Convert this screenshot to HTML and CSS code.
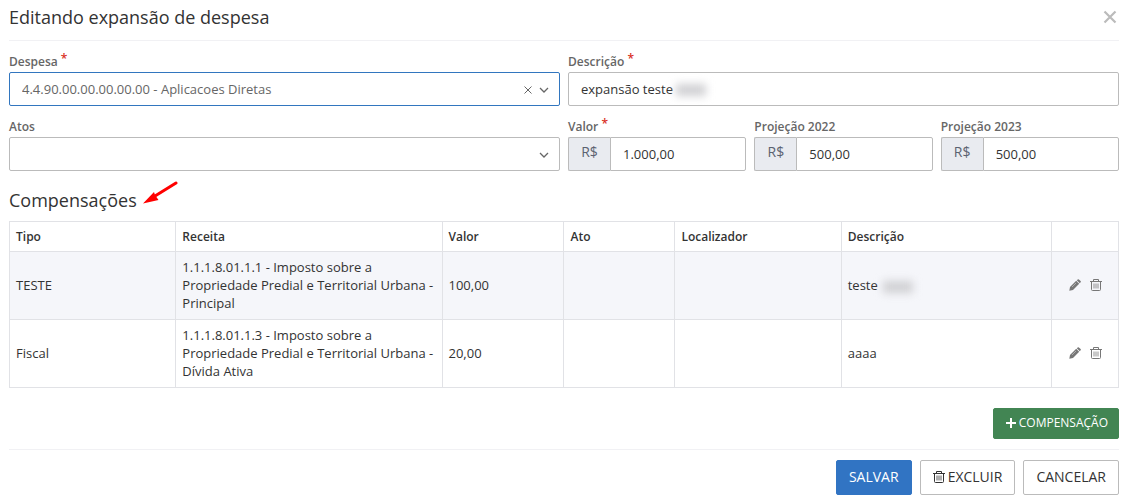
FILE: index.html
```html
<!DOCTYPE html>
<html lang="pt-BR">
<head>
<meta charset="utf-8">
<title>Editando expansão de despesa</title>
<link rel="stylesheet" href="styles.css">
</head>
<body>
<svg class="sprite" aria-hidden="true">
  <symbol id="trash" viewBox="0 0 12 12"><path d="M0 2.500h12M3.500 2.500V.5h5v2M1.500 2.500V10.500q0 1 1 1h7q1 0 1-1V2.500" fill="none" stroke="currentColor"/><path d="M4 4.500v5M6 4.500v5M8 4.500v5" stroke="currentColor" stroke-width=".8"/></symbol>
  <symbol id="pencil" viewBox="0 0 12 12"><path d="M.3 11.700l.7-3.700L7.200 1.800l3 3L4 11zM7.800 1.200l.9-.8q.6-.5 1.200 0l1.700 1.700q.5.600 0 1.200l-.8.900z" fill="currentColor"/><path d="M3 8l4-4" stroke="#fff" stroke-width=".4"/></symbol>
  <symbol id="chevron" viewBox="0 0 10 6"><path d="M1 1l4 4 4-4" fill="none" stroke="currentColor" stroke-width="1.300"/></symbol>
</svg>
<form class="dialog">
  <header class="dialog-header">
    <h1 class="title">Editando expansão de despesa</h1>
    <button class="close" type="button" aria-label="Fechar"><svg viewBox="0 0 14 14" width="14" height="14"><path d="M1.500 1.500l11 11M12.500 1.500l-11 11" stroke="currentColor" stroke-width="2.200"/></svg></button>
  </header>

  <div class="fields">
    <div class="field">
      <label class="label" for="despesa">Despesa <span class="required">*</span></label>
      <div class="select-box">
        <select class="control select focused" id="despesa"><option>4.4.90.00.00.00.00.00 - Aplicacoes Diretas</option></select>
        <button class="clear" type="button" aria-label="Limpar"><svg viewBox="0 0 8 8" width="8" height="8"><path d="M.5.500l7 7M7.500.500l-7 7" stroke="currentColor"/></svg></button>
        <svg class="chevron" width="10" height="6"><use href="#chevron"/></svg>
      </div>
    </div>
    <div class="field">
      <label class="label" for="descricao">Descrição <span class="required">*</span></label>
      <div class="select-box">
        <input class="control" id="descricao" type="text" value="expansão teste">
        <span class="smudge input-smudge"></span>
      </div>
    </div>
    <div class="field">
      <label class="label" for="atos">Atos</label>
      <div class="select-box">
        <select class="control select" id="atos"><option></option></select>
        <svg class="chevron" width="10" height="6"><use href="#chevron"/></svg>
      </div>
    </div>
    <div class="amounts">
      <div class="field">
        <label class="label" for="valor">Valor <span class="required">*</span></label>
        <div class="money"><span class="prefix">R$</span><input class="control amount" id="valor" type="text" value="1.000,00"></div>
      </div>
      <div class="field">
        <label class="label" for="p2022">Projeção 2022</label>
        <div class="money"><span class="prefix">R$</span><input class="control amount" id="p2022" type="text" value="500,00"></div>
      </div>
      <div class="field">
        <label class="label" for="p2023">Projeção 2023</label>
        <div class="money"><span class="prefix">R$</span><input class="control amount" id="p2023" type="text" value="500,00"></div>
      </div>
    </div>
  </div>

  <div class="section-head">
    <h2 class="title">Compensações</h2>
    <svg class="arrow" viewBox="0 0 36 24" width="36" height="24"><path d="M33 2L12 15" stroke="#f00" stroke-width="3" stroke-linecap="round"/><path d="M0 22.500L11 11 12 14 15.500 19z" fill="#f00"/></svg>
  </div>

  <table class="table">
    <colgroup><col class="c15"><col class="c24"><col class="c11"><col class="c10"><col class="c15"><col class="c19"><col class="c6"></colgroup>
    <thead><tr><th>Tipo</th><th>Receita</th><th>Valor</th><th>Ato</th><th>Localizador</th><th>Descrição</th><th></th></tr></thead>
    <tbody>
      <tr>
        <td>TESTE</td><td>1.1.1.8.01.1.1 - Imposto sobre a Propriedade Predial e Territorial Urbana - Principal</td><td>100,00</td><td></td><td></td>
        <td>teste<span class="smudge"></span></td>
        <td><div class="actions"><button class="icon-button" type="button" aria-label="Editar"><svg width="12" height="12"><use href="#pencil"/></svg></button><button class="icon-button" type="button" aria-label="Excluir"><svg width="12" height="12"><use href="#trash"/></svg></button></div></td>
      </tr>
      <tr>
        <td>Fiscal</td><td>1.1.1.8.01.1.3 - Imposto sobre a Propriedade Predial e Territorial Urbana - Dívida Ativa</td><td>20,00</td><td></td><td></td>
        <td>aaaa</td>
        <td><div class="actions"><button class="icon-button" type="button" aria-label="Editar"><svg width="12" height="12"><use href="#pencil"/></svg></button><button class="icon-button" type="button" aria-label="Excluir"><svg width="12" height="12"><use href="#trash"/></svg></button></div></td>
      </tr>
    </tbody>
  </table>

  <div class="add-row">
    <button class="button add" type="button"><svg viewBox="0 0 10 10" width="10" height="10"><path d="M5 0v10M0 5h10" stroke="currentColor" stroke-width="2"/></svg>COMPENSAÇÃO</button>
  </div>
  <footer class="dialog-footer">
    <button class="button primary" type="submit">SALVAR</button>
    <button class="button" type="button"><svg width="12" height="12"><use href="#trash"/></svg>EXCLUIR</button>
    <button class="button" type="button">CANCELAR</button>
  </footer>
</form>
</body>
</html>
```
FILE: styles.css
```css
* { box-sizing: border-box; }
body {
  margin: 0;
  background: #fff;
  color: #333;
  font: 13px/18px "Open Sans", "Noto Sans", sans-serif;
}
button, input, select { font: inherit; color: inherit; }
button { padding: 0; border: 0; background: none; cursor: pointer; }
svg { display: block; flex: none; }
.sprite { position: absolute; width: 0; height: 0; }
.dialog { padding: 0 10px 0 9px; }
.dialog-header {
  display: flex;
  align-items: center;
  justify-content: space-between;
  height: 41px;
  padding-bottom: 7px;
  border-bottom: 1px solid #f1f1f4;
}
.title { margin: 0; font-size: 18px; line-height: 24px; font-weight: 400; }
.close { padding: 2px; color: #bbb; }

.fields {
  display: grid;
  grid-template-columns: 1fr 1fr;
  gap: 13px 8px;
  padding-top: 13px;
}
.field { min-width: 0; }
.label {
  display: block;
  height: 18px;
  color: #666;
  font-size: 12px;
  line-height: 16px;
  font-weight: 600;
}
.required { color: #d93025; vertical-align: top; line-height: 10px; }
.select-box { position: relative; }
.control {
  display: block;
  width: 100%;
  height: 34px;
  padding: 0 12px;
  border: 1px solid #bbb;
  border-radius: 2px;
  background: #fff;
  outline: none;
}
.select { appearance: none; color: #666; }
.focused { border-color: #3276bf; }
.chevron { position: absolute; top: 15px; right: 11px; color: #666; pointer-events: none; }
.clear { position: absolute; top: 14px; right: 28px; color: #666; }
.amounts { display: grid; grid-template-columns: repeat(3, 1fr); gap: 8px; }
.money { display: flex; }
.prefix {
  flex: none;
  width: 42px;
  padding-top: 5px;
  border: 1px solid #bbb;
  border-right: 0;
  border-radius: 2px 0 0 2px;
  background: #e9ebf0;
  color: #5b6270;
  font-size: 14px;
  text-align: center;
}
.amount { flex: 1; min-width: 0; border-radius: 0 2px 2px 0; }
.smudge {
  display: inline-block;
  width: 30px;
  height: 12px;
  margin-left: 5px;
  background: #d0d0d3;
  vertical-align: middle;
  filter: blur(4px);
}
.input-smudge { position: absolute; top: 12px; left: 103px; }

.section-head {
  display: flex;
  gap: 6px;
  padding: 10px 0 9px;
}
.section-head .title { padding-top: 7px; }

.table { width: 100%; border-collapse: collapse; table-layout: fixed; }
.table th, .table td {
  padding: 7px 6px;
  border: 1px solid #e1e2e6;
  text-align: left;
  vertical-align: middle;
}
.table td { padding: 6px 6px 7px; }
.table th { height: 30px; padding: 5px 6px; font-size: 12px; font-weight: 600; }
.table tbody tr:first-child { background: #f5f6fa; }
.c6 { width: 6%; }
.c10 { width: 10%; }
.c11 { width: 11%; }
.c15 { width: 15%; }
.c19 { width: 19%; }
.c24 { width: 24%; }
.actions { display: flex; justify-content: center; gap: 9px; }
.icon-button { color: #777; }

.add-row { display: flex; justify-content: flex-end; padding: 20px 0 10px; }
.dialog-footer {
  display: flex;
  justify-content: flex-end;
  gap: 8px;
  padding-top: 10px;
  border-top: 1px solid #f1f1f4;
}
.button {
  display: flex;
  align-items: center;
  gap: 3px;
  height: 35px;
  padding: 0 12px 1px;
  border: 1px solid #bbb;
  border-radius: 2px;
  background: #fff;
  font-size: 14px;
}
.primary { border-color: #3174c3; background: #3174c3; color: #fff; font-weight: 500; }
.add { height: 31px; padding: 0 10px 2px 12px; border-color: #428553; background: #428553; color: #fff; font-size: 12px; }
```
